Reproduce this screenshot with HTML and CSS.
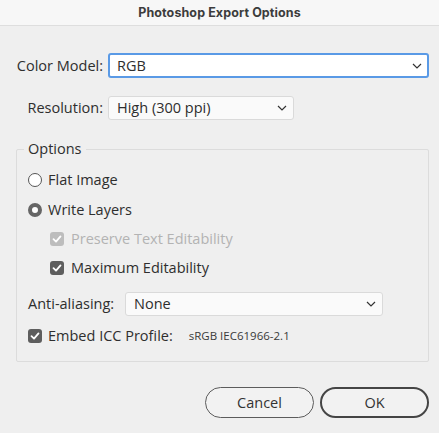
FILE: index.html
```html
<!DOCTYPE html>
<html>
<head>
<meta charset="utf-8">
<link rel="stylesheet" href="styles.css">
</head>
<body>
<div class="window">
  <div class="titlebar">Photoshop Export Options</div>
  <div class="content">
    <div class="form-row row-color">
      <span class="label">Color Model:</span>
      <div class="select select-focus select-wide"><span>RGB</span><svg class="chev" viewBox="0 0 10 6" width="10" height="6"><path d="M1 1 L5 5 L9 1" fill="none" stroke="#333" stroke-width="1.2"/></svg></div>
    </div>
    <div class="form-row row-res">
      <span class="label">Resolution:</span>
      <div class="select select-res"><span>High (300 ppi)</span><svg class="chev" viewBox="0 0 10 6" width="10" height="6"><path d="M1 1 L5 5 L9 1" fill="none" stroke="#333" stroke-width="1.2"/></svg></div>
    </div>
    <div class="group">
      <span class="legend">Options</span>
      <div class="opt radio-row"><span class="radio"></span><span>Flat Image</span></div>
      <div class="opt radio-row r2"><span class="radio on"></span><span>Write Layers</span></div>
      <div class="opt sub disabled"><span class="check dis"><svg viewBox="0 0 14 14" width="14" height="14"><path d="M3.5 7.2 L6 9.6 L10.5 4.4" fill="none" stroke="#fff" stroke-width="1.8" stroke-linecap="round" stroke-linejoin="round"/></svg></span><span>Preserve Text Editability</span></div>
      <div class="opt sub s2"><span class="check"><svg viewBox="0 0 14 14" width="14" height="14"><path d="M3.5 7.2 L6 9.6 L10.5 4.4" fill="none" stroke="#fff" stroke-width="1.8" stroke-linecap="round" stroke-linejoin="round"/></svg></span><span>Maximum Editability</span></div>
      <div class="opt aa-row"><span class="aa-label">Anti-aliasing:</span><div class="select select-aa"><span>None</span><svg class="chev" viewBox="0 0 10 6" width="10" height="6"><path d="M1 1 L5 5 L9 1" fill="none" stroke="#333" stroke-width="1.2"/></svg></div></div>
      <div class="opt icc-row"><span class="check"><svg viewBox="0 0 14 14" width="14" height="14"><path d="M3.5 7.2 L6 9.6 L10.5 4.4" fill="none" stroke="#fff" stroke-width="1.8" stroke-linecap="round" stroke-linejoin="round"/></svg></span><span class="icc-label">Embed ICC Profile:</span><span class="icc-val">sRGB IEC61966-2.1</span></div>
    </div>
    <div class="buttons">
      <button class="btn">Cancel</button>
      <button class="btn btn-ok">OK</button>
    </div>
  </div>
</div>
</body>
</html>
```
FILE: styles.css
```css
html, body {
  margin: 0;
  padding: 0;
  background: #efefef;
}
body {
  font-family: "Open Sans", "Noto Sans", sans-serif;
  color: #2e2e2e;
  font-size: 14.5px;
  line-height: 20px;
}
.window {
  width: 439px;
  height: 433px;
  background: #efefef;
  overflow: hidden;
}
.titlebar {
  height: 25px;
  line-height: 25px;
  background: #f7f7f7;
  border-bottom: 1px solid #dedede;
  text-align: center;
  font-family: "Inter", "Liberation Sans", sans-serif;
  font-weight: 700;
  font-size: 12.5px;
  color: #3c3c3c;
  letter-spacing: 0.1px;
}
.content {
  padding: 27px 10px 0 16px;
  display: flex;
  flex-direction: column;
}
.form-row {
  display: flex;
  align-items: center;
}
.label {
  width: 87px;
  text-align: right;
  margin-right: 5px;
  white-space: nowrap;
}
.select {
  box-sizing: border-box;
  display: flex;
  align-items: center;
  justify-content: space-between;
  background: #fafafa;
  border: 1px solid #dadada;
  border-radius: 3px;
  padding: 0 6px 0 8px;
  height: 24px;
}
.select-focus {
  background: #fff;
  border: 2px solid #5a9ae6;
  height: 25px;
  padding-left: 7px;
  padding-right: 5px;
}
.select-wide {
  width: 321px;
}
.row-res {
  margin-top: 18px;
}
.select-res {
  width: 186px;
}
.chev {
  display: block;
}
.group {
  position: relative;
  margin-top: 29px;
  width: 413px;
  height: 213px;
  box-sizing: border-box;
  border: 1px solid #dcdcdc;
  border-radius: 2px;
  padding: 20px 0 0 11px;
  display: flex;
  flex-direction: column;
}
.legend {
  position: absolute;
  top: -10px;
  left: 7px;
  padding: 0 4px;
  background: #efefef;
  line-height: 18px;
}
.opt {
  display: flex;
  align-items: center;
  height: 20px;
  white-space: nowrap;
}
.radio {
  box-sizing: border-box;
  width: 14px;
  height: 14px;
  border-radius: 50%;
  border: 1px solid #555;
  background: #fff;
  margin-right: 6px;
}
.radio.on {
  border: 4px solid #666;
  background: #fff;
}
.r2 {
  margin-top: 10px;
}
.sub {
  margin-top: 9px;
  padding-left: 22px;
}
.s2 {
  margin-top: 9px;
}
.check {
  box-sizing: border-box;
  width: 14px;
  height: 14px;
  border-radius: 3px;
  background: #5e5e5e;
  margin-right: 7px;
  display: flex;
}
.check.dis {
  background: #bdbdbd;
}
.disabled {
  color: #b3b3b3;
}
.aa-row {
  margin-top: 14px;
  height: 24px;
}
.aa-label {
  width: 97px;
  flex: none;
}
.select-aa {
  width: 258px;
}
.icc-row {
  margin-top: 10px;
}
.icc-row .check {
  margin-right: 6px;
}
.icc-val {
  margin-left: 16px;
  font-size: 11.5px;
  color: #3a3a3a;
}
.buttons {
  display: flex;
  justify-content: flex-end;
  gap: 6px;
  margin-top: 25px;
  padding-right: 0;
}
.btn {
  box-sizing: border-box;
  width: 109px;
  height: 31px;
  border-radius: 16px;
  border: 1px solid #5c5c5c;
  background: #f2f2f2;
  font-family: "Open Sans", "Noto Sans", sans-serif;
  font-size: 14.5px;
  color: #333;
  padding: 0;
}
.btn-ok {
  border: 2px solid #454545;
}
```
